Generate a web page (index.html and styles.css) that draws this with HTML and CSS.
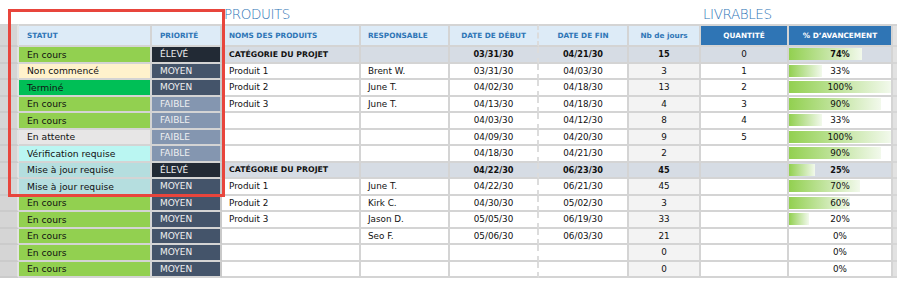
FILE: index.html
```html
<!DOCTYPE html>
<html lang="fr">
<head>
<meta charset="utf-8">
<title>Produits et livrables</title>
<link rel="stylesheet" href="styles.css">
</head>
<body>
<div class="sheet">
  <div class="titles">
    <span class="title t-prod">PRODUITS</span>
    <span class="title t-liv">LIVRABLES</span>
  </div>

  <div class="row head">
    <div class="c gut"></div>
    <div class="c h">STATUT</div>
    <div class="c h">PRIORITÉ</div>
    <div class="c h nm">NOMS DES PRODUITS</div>
    <div class="c h nm">RESPONSABLE</div>
    <div class="c h ctr dash">DATE DE DÉBUT</div>
    <div class="c h ctr">DATE DE FIN</div>
    <div class="c h ctr">Nb de jours</div>
    <div class="c h dark ctr">QUANTITÉ</div>
    <div class="c h dark ctr">% D’AVANCEMENT</div>
    <div class="c rgut"></div>
  </div>

  <div class="row cat">
    <div class="c gut"></div>
    <div class="c st st-cours">En cours</div>
    <div class="c pr pr-eleve">ÉLEVÉ</div>
    <div class="c nm b">CATÉGORIE DU PROJET</div>
    <div class="c nm"></div>
    <div class="c ctr dash b">03/31/30</div>
    <div class="c ctr b">04/21/30</div>
    <div class="c ctr nb b">15</div>
    <div class="c ctr">0</div>
    <div class="c pc"><span class="bar" style="width:72%"></span><span class="pv b">74%</span></div>
    <div class="c rgut"></div>
  </div>

  <div class="row">
    <div class="c gut"></div>
    <div class="c st st-non">Non commencé</div>
    <div class="c pr pr-moyen">MOYEN</div>
    <div class="c nm">Produit 1</div>
    <div class="c nm">Brent W.</div>
    <div class="c ctr dash">03/31/30</div>
    <div class="c ctr">04/03/30</div>
    <div class="c ctr nb">3</div>
    <div class="c ctr">1</div>
    <div class="c pc"><span class="bar" style="width:32%"></span><span class="pv">33%</span></div>
    <div class="c rgut"></div>
  </div>

  <div class="row">
    <div class="c gut"></div>
    <div class="c st st-fini">Terminé</div>
    <div class="c pr pr-moyen">MOYEN</div>
    <div class="c nm">Produit 2</div>
    <div class="c nm">June T.</div>
    <div class="c ctr dash">04/02/30</div>
    <div class="c ctr">04/18/30</div>
    <div class="c ctr nb">13</div>
    <div class="c ctr">2</div>
    <div class="c pc"><span class="bar" style="width:100%"></span><span class="pv">100%</span></div>
    <div class="c rgut"></div>
  </div>

  <div class="row">
    <div class="c gut"></div>
    <div class="c st st-cours">En cours</div>
    <div class="c pr pr-faible">FAIBLE</div>
    <div class="c nm">Produit 3</div>
    <div class="c nm">June T.</div>
    <div class="c ctr dash">04/13/30</div>
    <div class="c ctr">04/18/30</div>
    <div class="c ctr nb">4</div>
    <div class="c ctr">3</div>
    <div class="c pc"><span class="bar" style="width:90%"></span><span class="pv">90%</span></div>
    <div class="c rgut"></div>
  </div>

  <div class="row">
    <div class="c gut"></div>
    <div class="c st st-cours">En cours</div>
    <div class="c pr pr-faible">FAIBLE</div>
    <div class="c nm"></div>
    <div class="c nm"></div>
    <div class="c ctr dash">04/03/30</div>
    <div class="c ctr">04/12/30</div>
    <div class="c ctr nb">8</div>
    <div class="c ctr">4</div>
    <div class="c pc"><span class="bar" style="width:32%"></span><span class="pv">33%</span></div>
    <div class="c rgut"></div>
  </div>

  <div class="row">
    <div class="c gut"></div>
    <div class="c st st-att">En attente</div>
    <div class="c pr pr-faible">FAIBLE</div>
    <div class="c nm"></div>
    <div class="c nm"></div>
    <div class="c ctr dash">04/09/30</div>
    <div class="c ctr">04/20/30</div>
    <div class="c ctr nb">9</div>
    <div class="c ctr">5</div>
    <div class="c pc"><span class="bar" style="width:100%"></span><span class="pv">100%</span></div>
    <div class="c rgut"></div>
  </div>

  <div class="row">
    <div class="c gut"></div>
    <div class="c st st-verif">Vérification requise</div>
    <div class="c pr pr-faible">FAIBLE</div>
    <div class="c nm"></div>
    <div class="c nm"></div>
    <div class="c ctr dash">04/18/30</div>
    <div class="c ctr">04/21/30</div>
    <div class="c ctr nb">2</div>
    <div class="c ctr"></div>
    <div class="c pc"><span class="bar" style="width:90%"></span><span class="pv">90%</span></div>
    <div class="c rgut"></div>
  </div>

  <div class="row cat">
    <div class="c gut"></div>
    <div class="c st st-maj">Mise à jour requise</div>
    <div class="c pr pr-eleve">ÉLEVÉ</div>
    <div class="c nm b">CATÉGORIE DU PROJET</div>
    <div class="c nm"></div>
    <div class="c ctr dash b">04/22/30</div>
    <div class="c ctr b">06/23/30</div>
    <div class="c ctr nb b">45</div>
    <div class="c ctr"></div>
    <div class="c pc"><span class="bar" style="width:25%"></span><span class="pv b">25%</span></div>
    <div class="c rgut"></div>
  </div>

  <div class="row">
    <div class="c gut"></div>
    <div class="c st st-maj">Mise à jour requise</div>
    <div class="c pr pr-moyen">MOYEN</div>
    <div class="c nm">Produit 1</div>
    <div class="c nm">June T.</div>
    <div class="c ctr dash">04/22/30</div>
    <div class="c ctr">06/21/30</div>
    <div class="c ctr nb">45</div>
    <div class="c ctr"></div>
    <div class="c pc"><span class="bar" style="width:70%"></span><span class="pv">70%</span></div>
    <div class="c rgut"></div>
  </div>

  <div class="row">
    <div class="c gut"></div>
    <div class="c st st-cours">En cours</div>
    <div class="c pr pr-moyen">MOYEN</div>
    <div class="c nm">Produit 2</div>
    <div class="c nm">Kirk C.</div>
    <div class="c ctr dash">04/30/30</div>
    <div class="c ctr">05/02/30</div>
    <div class="c ctr nb">3</div>
    <div class="c ctr"></div>
    <div class="c pc"><span class="bar" style="width:60%"></span><span class="pv">60%</span></div>
    <div class="c rgut"></div>
  </div>

  <div class="row">
    <div class="c gut"></div>
    <div class="c st st-cours">En cours</div>
    <div class="c pr pr-moyen">MOYEN</div>
    <div class="c nm">Produit 3</div>
    <div class="c nm">Jason D.</div>
    <div class="c ctr dash">05/05/30</div>
    <div class="c ctr">06/19/30</div>
    <div class="c ctr nb">33</div>
    <div class="c ctr"></div>
    <div class="c pc"><span class="bar" style="width:20%"></span><span class="pv">20%</span></div>
    <div class="c rgut"></div>
  </div>

  <div class="row">
    <div class="c gut"></div>
    <div class="c st st-cours">En cours</div>
    <div class="c pr pr-moyen">MOYEN</div>
    <div class="c nm"></div>
    <div class="c nm">Seo F.</div>
    <div class="c ctr dash">05/06/30</div>
    <div class="c ctr">06/03/30</div>
    <div class="c ctr nb">21</div>
    <div class="c ctr"></div>
    <div class="c pc"><span class="pv">0%</span></div>
    <div class="c rgut"></div>
  </div>

  <div class="row">
    <div class="c gut"></div>
    <div class="c st st-cours">En cours</div>
    <div class="c pr pr-moyen">MOYEN</div>
    <div class="c nm"></div>
    <div class="c nm"></div>
    <div class="c ctr dash"></div>
    <div class="c ctr"></div>
    <div class="c ctr nb">0</div>
    <div class="c ctr"></div>
    <div class="c pc"><span class="pv">0%</span></div>
    <div class="c rgut"></div>
  </div>

  <div class="row">
    <div class="c gut"></div>
    <div class="c st st-cours">En cours</div>
    <div class="c pr pr-moyen">MOYEN</div>
    <div class="c nm"></div>
    <div class="c nm"></div>
    <div class="c ctr dash"></div>
    <div class="c ctr"></div>
    <div class="c ctr nb">0</div>
    <div class="c ctr"></div>
    <div class="c pc"><span class="pv">0%</span></div>
    <div class="c rgut"></div>
  </div>

  <div class="redbox"></div>
</div>
</body>
</html>
```

FILE: styles.css
```css
:root {
  --cols: 19px 133px 70px 139px 89px 89px 90px 72px 88px 104px 4px;
  --line: #d4d4d4;
}

html, body {
  margin: 0;
  padding: 0;
  background: #ffffff;
}

body {
  font-family: "DejaVu Sans", "Liberation Sans", sans-serif;
  color: #111111;
}

.sheet {
  position: relative;
  width: 897px;
}

.titles {
  display: grid;
  grid-template-columns: var(--cols);
  height: 24px;
}

.title {
  align-self: end;
  white-space: nowrap;
  font-size: 13.5px;
  line-height: 14px;
  letter-spacing: -0.4px;
  color: #2e75b6;
  padding: 0 0 3px 2px;
  font-weight: 300;
}

.t-prod { grid-column: 4; }
.t-liv { grid-column: 9; }

.row {
  display: grid;
  grid-template-columns: var(--cols);
  height: 16.5px;
}

.row.head {
  height: 23px;
}

.c {
  box-sizing: border-box;
  border-right: 2px solid var(--line);
  border-bottom: 2px solid var(--line);
  display: flex;
  align-items: center;
  padding: 0 0 0 8px;
  font-size: 8.8px;
  white-space: nowrap;
  overflow: hidden;
  background: #ffffff;
}

.c.st { font-size: 9.2px; }
.c.nm { padding-left: 7px; }
.c.ctr { justify-content: center; padding: 0; }
.c.dash { border-right: 2px dashed #dcdcdc; }

.c.gut {
  padding: 0;
  background: #d5d5d5;
  border-right-color: #e3e3e3;
  border-bottom-color: #cbcbcb;
}

.c.rgut {
  padding: 0;
  border-right: 0;
  background: #e2e2e2;
  border-bottom-color: #d6d6d6;
}

.head .c {
  border-top: 2px solid var(--line);
}

.c.h {
  background: #ddebf7;
  color: #2e75b6;
  font-weight: bold;
  font-size: 7.3px;
}

.c.h.dark {
  background: #2f75b5;
  color: #ffffff;
}

.head .c.gut { background: #d5d5d5; }
.head .c.rgut { background: #e2e2e2; }

.b { font-weight: bold; }
.c.nm.b { font-size: 7.8px; }
.c.ctr.b { font-size: 8.2px; }

.cat .c.nm,
.cat .c.ctr,
.cat .c.pc {
  background: #d6dce4;
}

.c.nb { background: #f3f3f3; }

/* Statut colours */
.st-cours { background: #92d050 !important; }
.st-non { background: #fff2cc !important; }
.st-fini { background: #00bf56 !important; }
.st-att { background: #e7e6e6 !important; }
.st-verif { background: #baf6f2 !important; }
.st-maj { background: #b5dedf !important; }

/* Priorité */
.c.pr {
  color: #f0f0f0;
  font-size: 9px;
  border-right-color: #c9c9c9;
}
.pr-eleve { background: #222a35 !important; }
.pr-moyen { background: #44546a !important; }
.pr-faible { background: #8496b0 !important; }

/* Avancement */
.c.pc {
  display: grid;
  align-items: center;
  padding: 0;
}

.bar {
  grid-area: 1 / 1;
  justify-self: start;
  height: 12px;
  background: linear-gradient(90deg, #92d050 0%, #c6e6a6 55%, #f2f9ec 100%);
}

.pv {
  grid-area: 1 / 1;
  justify-self: center;
  font-size: 8.8px;
}

.pv.b { font-size: 8.2px; }

.redbox {
  position: absolute;
  left: 8px;
  top: 9px;
  width: 217px;
  height: 188px;
  box-sizing: border-box;
  border: 3px solid #e8453c;
  pointer-events: none;
}
```
